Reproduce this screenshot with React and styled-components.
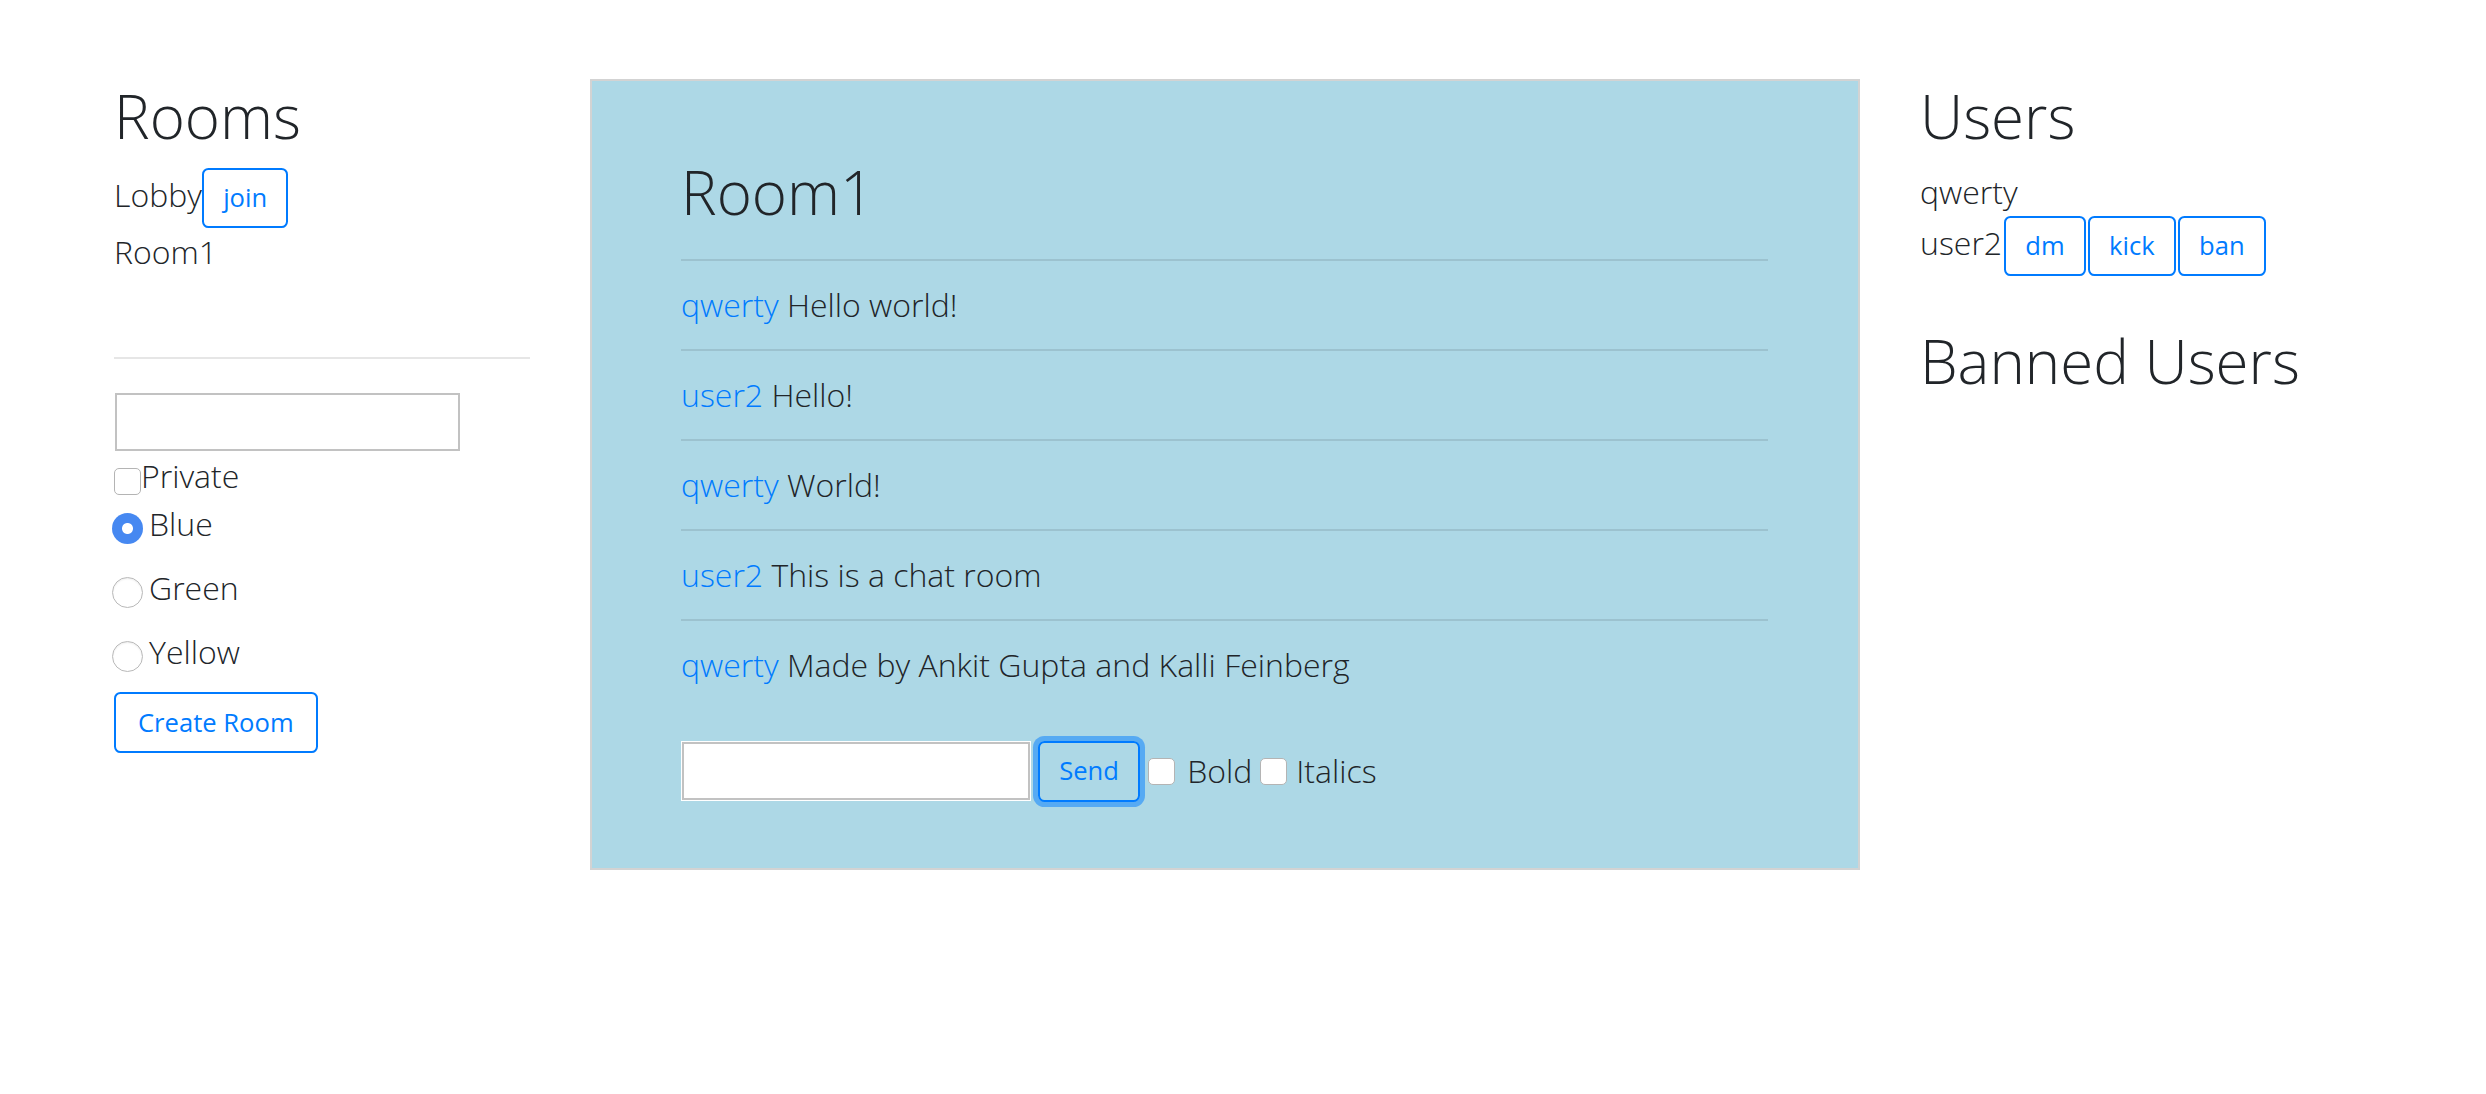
import React from 'react';
import styled, { createGlobalStyle } from 'styled-components';

const GlobalStyle = createGlobalStyle`
  body {
    margin: 0;
    background: #fff;
    font-family: "Open Sans", "Liberation Sans", sans-serif;
    font-weight: 300;
    font-size: 32px;
    color: #212529;
  }
`;

const Page = styled.div`
  display: flex;
  align-items: flex-start;
  padding: 78px 0 0 114px;
`;

const Column = styled.div`
  flex-shrink: 0;
  width: ${(p) => (p.$width ? `${p.$width}px` : 'auto')};
  margin-left: ${(p) => p.$offset || 0}px;
`;

const Heading = styled.h1`
  margin: ${(p) => p.$top || 0}px 0 ${(p) => (p.$bottom != null ? p.$bottom : 12.8)}px;
  font-size: 60px;
  font-weight: 300;
  line-height: 76.8px;
`;

const Line = styled.div`
  font-size: 32px;
  line-height: 48px;
`;

const OutlineButton = styled.button`
  display: inline-block;
  margin: 0 0 0 ${(p) => p.$gap || 0}px;
  padding: 9.2px 19.2px;
  font-family: "Open Sans", "Liberation Sans", sans-serif;
  font-size: 25.6px;
  font-weight: 400;
  line-height: 38.4px;
  color: #007bff;
  background: transparent;
  border: 2px solid #007bff;
  border-radius: 6.4px;
  vertical-align: baseline;
  cursor: pointer;
  box-shadow: ${(p) => (p.$focused ? '0 0 0 5px rgba(0, 123, 255, 0.5)' : 'none')};
`;

const Divider = styled.hr`
  margin: 81px 0 33px;
  border: 0;
  border-top: 2px solid #e6e6e6;
`;

const TextField = styled.input`
  display: block;
  box-sizing: border-box;
  width: ${(p) => p.$width}px;
  height: ${(p) => p.$height}px;
  margin: 0;
  padding: 0 8px;
  font-family: "Open Sans", sans-serif;
  font-size: 24px;
  background: #fff;
  border: 1px solid #fff;
  box-shadow: inset 0 0 0 2px #c2c2c2;
  outline: none;
`;

const Box = styled.input`
  appearance: none;
  box-sizing: border-box;
  flex-shrink: 0;
  width: 27px;
  height: 27px;
  margin: ${(p) => p.$margin || 0};
  background: #fff;
  border: 1.5px solid #b4b4b4;
  border-radius: 5px;
`;

const Radio = styled.input`
  appearance: none;
  box-sizing: border-box;
  flex-shrink: 0;
  width: 31px;
  height: 31px;
  margin: 13px 6px 0 -2px;
  background: #fff;
  border: 1.5px solid #b9b9b9;
  border-radius: 50%;
  box-shadow: inset 0 1px 2px rgba(0, 0, 0, 0.08);

  &:checked {
    border: 0;
    box-shadow: none;
    background: radial-gradient(circle, #fff 0 5px, #4688f1 6px);
  }
`;

const OptionRow = styled.label`
  display: flex;
  align-items: flex-start;
  height: ${(p) => p.$height}px;
  font-size: 32px;
  line-height: 48px;
`;

const CreateButton = styled(OutlineButton)`
  margin-top: 0;
  padding-left: 22px;
  padding-right: 22px;
`;

const Panel = styled.div`
  flex-shrink: 0;
  box-sizing: border-box;
  width: 1270px;
  margin: 1px 0 0 60px;
  padding: 73px 90px 66px 89px;
  background: #add8e6;
  border: 2px solid #d3d3d3;
`;

const PanelTitle = styled(Heading)`
  margin-bottom: 28px;
`;

const Message = styled.div`
  padding: 20px 0;
  font-size: 32px;
  line-height: 48px;
  border-top: 2px solid #9cc2cf;
`;

const Author = styled.span`
  color: #007bff;
`;

const Composer = styled.form`
  display: flex;
  align-items: center;
  margin-top: 32px;
  font-size: 32px;
  line-height: 48px;
`;

const rooms = [{ name: 'Lobby', joinable: true }, { name: 'Room1' }];
const colours = ['Blue', 'Green', 'Yellow'];
const messages = [
  { user: 'qwerty', text: 'Hello world!' },
  { user: 'user2', text: 'Hello!' },
  { user: 'qwerty', text: 'World!' },
  { user: 'user2', text: 'This is a chat room' },
  { user: 'qwerty', text: 'Made by Ankit Gupta and Kalli Feinberg' },
];

export default function App() {
  return (
    <>
      <GlobalStyle />
      <Page>
        <Column $width={416}>
          <Heading>Rooms</Heading>
          {rooms.map((r) => (
            <Line key={r.name}>
              {r.name}
              {r.joinable && <OutlineButton type="button">join</OutlineButton>}
            </Line>
          ))}
          <Divider />
          <TextField type="text" $width={347} $height={60} />
          <OptionRow $height={48}>
            <Box type="checkbox" $margin="16px 0 0 0" />
            Private
          </OptionRow>
          {colours.map((c) => (
            <OptionRow key={c} $height={64}>
              <Radio type="radio" name="colour" defaultChecked={c === 'Blue'} />
              {c}
            </OptionRow>
          ))}
          <CreateButton type="button">Create Room</CreateButton>
        </Column>

        <Panel>
          <PanelTitle>Room1</PanelTitle>
          {messages.map((m, i) => (
            <Message key={i}>
              <Author>{m.user}</Author> {m.text}
            </Message>
          ))}
          <Composer onSubmit={(e) => e.preventDefault()}>
            <TextField type="text" $width={350} $height={60} />
            <OutlineButton type="submit" $gap={7} $focused>Send</OutlineButton>
            <Box type="checkbox" $margin="0 12px 0 8px" />
            Bold
            <Box type="checkbox" $margin="0 9px 0 8px" />
            Italics
          </Composer>
        </Panel>

        <Column $offset={60}>
          <Heading>Users</Heading>
          <Line>qwerty</Line>
          <Line>
            user2
            <OutlineButton type="button" $gap={2}>dm</OutlineButton>
            <OutlineButton type="button" $gap={2}>kick</OutlineButton>
            <OutlineButton type="button" $gap={2}>ban</OutlineButton>
          </Line>
          <Heading $top={46.6}>Banned Users</Heading>
        </Column>
      </Page>
    </>
  );
}
